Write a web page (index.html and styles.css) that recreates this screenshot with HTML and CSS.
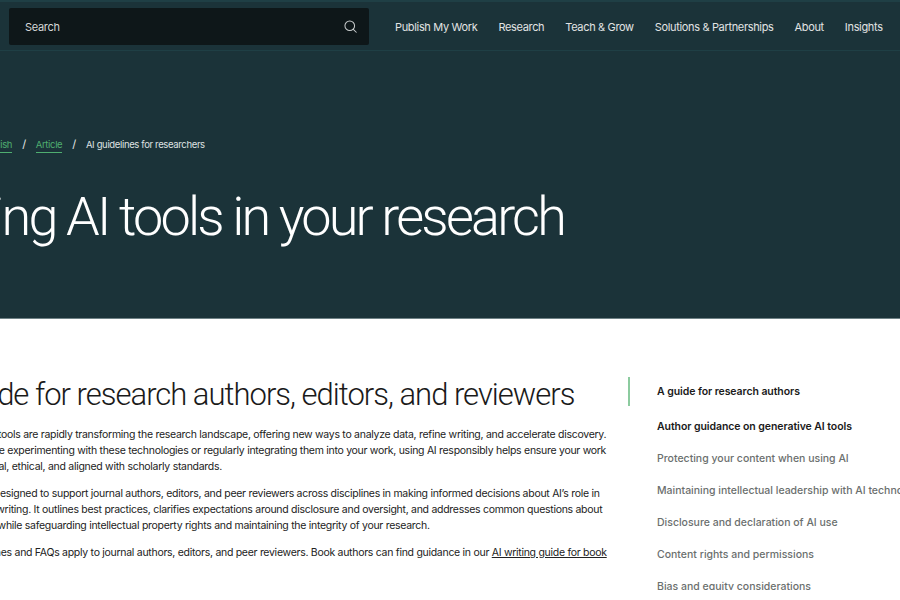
FILE: index.html
```html
<!DOCTYPE html>
<html lang="en">

<head>
    <meta charset="UTF-8">
    <meta name="viewport" content="width=device-width, initial-scale=1.0">
    <title>AI guidelines for researchers</title>
    <link rel="stylesheet" href="styles.css">
</head>

<body>
    <header class="topbar">
        <div class="search-box">
            <span class="search-label">Search</span>
            <svg class="search-icon" width="13" height="13" viewBox="0 0 14 14" fill="none" stroke="currentColor" stroke-width="1.1" stroke-linecap="round">
                <circle cx="6.2" cy="6.2" r="5.2"></circle>
                <path d="M10 10 13.2 13.2"></path>
            </svg>
        </div>
        <nav class="main-nav">
            <a href="#">Publish My Work</a>
            <a href="#">Research</a>
            <a href="#">Teach &amp; Grow</a>
            <a href="#">Solutions &amp; Partnerships</a>
            <a href="#">About</a>
            <a href="#">Insights</a>
        </nav>
    </header>

    <!-- Hero -->
    <section class="hero">
        <div class="crumbs">
            <a href="#">Home</a>
            <span class="sep">/</span>
            <a href="#">Publish</a>
            <span class="sep">/</span>
            <a href="#">Article</a>
            <span class="sep">/</span>
            <span>AI guidelines for researchers</span>
        </div>
        <h1>Using AI tools in your research</h1>
    </section>

    <!-- Article and side menu -->
    <div class="content">
        <main class="article">
            <h2>A guide for research authors, editors, and reviewers</h2>
            <p>Generative AI tools are rapidly transforming the research landscape, offering new ways to analyze data, refine writing, and accelerate discovery.<br>
                Whether you're experimenting with these technologies or regularly integrating them into your work, using AI responsibly helps ensure your work<br>
                remains original, ethical, and aligned with scholarly standards.</p>
            <p>This guide is designed to support journal authors, editors, and peer reviewers across disciplines in making informed decisions about AI’s role in<br>
                research and writing. It outlines best practices, clarifies expectations around disclosure and oversight, and addresses common questions about<br>
                using AI tools while safeguarding intellectual property rights and maintaining the integrity of your research.</p>
            <p>These guidelines and FAQs apply to journal authors, editors, and peer reviewers. Book authors can find guidance in our <a href="#">AI writing guide for book</a></p>
        </main>
        <aside class="side-menu">
            <a class="active" href="#">A guide for research authors</a>
            <a class="strong" href="#">Author guidance on generative AI tools</a>
            <a href="#">Protecting your content when using AI</a>
            <a href="#">Maintaining intellectual leadership with AI technologies</a>
            <a href="#">Disclosure and declaration of AI use</a>
            <a href="#">Content rights and permissions</a>
            <a href="#">Bias and equity considerations</a>
        </aside>
    </div>
</body>

</html>
```

FILE: styles.css
```css
* {
    box-sizing: border-box;
    margin: 0;
    padding: 0;
}

html,
body {
    height: 600px;
    overflow: hidden;
}

body {
    font-family: 'Inter', 'Liberation Sans', sans-serif;
    background-color: #fff;
    color: #1a1a1a;
}

a {
    color: inherit;
    text-decoration: none;
}

.topbar {
    display: flex;
    align-items: center;
    height: 51px;
    padding-left: 9px;
    background-color: #1b3339;
    border-top: 2px solid #1f3f45;
    border-bottom: 1px solid #1f3f45;
}

.search-box {
    display: flex;
    flex: none;
    justify-content: space-between;
    align-items: center;
    width: 360px;
    height: 37px;
    padding: 1px 12px 0 16px;
    background-color: #0e1719;
    border-radius: 2px;
    color: #d5d8d8;
    font-size: 11px;
    letter-spacing: -0.3px;
}

.search-icon {
    color: #c9cdcd;
}

.main-nav {
    display: flex;
    gap: 21px;
    margin-left: 26px;
    padding-top: 1px;
    color: #e2e4e4;
    font-size: 11px;
    letter-spacing: -0.34px;
    white-space: nowrap;
}

.hero {
    height: 268px;
    background-color: #1b3339;
    border-bottom: 1px solid #6f8286;
    color: #fff;
}

.crumbs {
    display: flex;
    align-items: baseline;
    gap: 10px;
    margin-left: -67px;
    padding-top: 86px;
    font-size: 9.5px;
    letter-spacing: -0.35px;
    color: #dfe2e2;
}

.crumbs a {
    color: #4fae70;
    border-bottom: 1px solid #4fae70;
    padding-bottom: 2px;
}

.crumbs .sep {
    color: #e6e8e8;
    font-size: 11px;
}

.hero h1 {
    margin-left: -65px;
    margin-top: 32px;
    font-family: 'Roboto', 'Inter', sans-serif;
    font-size: 54px;
    font-weight: 300;
    line-height: 1.2;
    letter-spacing: -2.8px;
    white-space: nowrap;
}

.content {
    display: flex;
    height: 271px;
    padding-top: 58px;
    overflow: hidden;
}

.article {
    flex: none;
    width: 696px;
    margin-left: -68px;
    white-space: nowrap;
}

.article h2 {
    margin-left: 2px;
    font-family: 'Roboto', 'Inter', sans-serif;
    font-size: 31px;
    font-weight: 300;
    line-height: 36px;
    letter-spacing: -1px;
    margin-bottom: 14px;
}

.article p {
    font-size: 10.5px;
    line-height: 16px;
    letter-spacing: -0.285px;
    margin-bottom: 11px;
    color: #222;
}

.article p a {
    text-decoration: underline;
}

.side-menu {
    display: flex;
    flex-direction: column;
    gap: 16px;
    white-space: nowrap;
    font-size: 10.5px;
    line-height: 16px;
    font-weight: 500;
    color: #6b6f6e;
}

.side-menu a {
    padding-left: 29px;
}

.side-menu .active {
    color: #1a1a1a;
    font-weight: 600;
    letter-spacing: -0.07px;
    border-left: 2px solid #8ccb9f;
    padding: 7px 0 6px 27px;
    margin-bottom: -3px;
}

.side-menu .strong {
    color: #1a1a1a;
    font-weight: 600;
    letter-spacing: -0.07px;
}
```
